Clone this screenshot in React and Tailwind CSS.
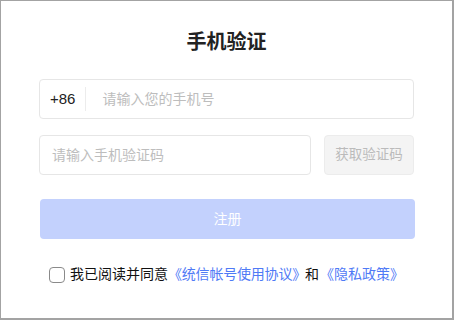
const App = () => {
  return (
    <div
      className="w-[454px] h-[320px] bg-white border border-r-2 border-b-2 border-[#a3a3a3] px-[38px] pt-[27px]"
      style={{ fontFamily: '"Liberation Sans", "Noto Sans CJK SC", sans-serif' }}
    >
      <h1 className="text-center text-[20px] leading-[28px] font-bold text-[#222]">手机验证</h1>

      <div className="mt-[23px] flex items-center h-[40px] border border-[#e6e6e6] rounded-[4px]">
        <span className="pl-[10px] pr-[10px] text-[15px] text-[#222]">+86</span>
        <span className="w-px h-[24px] bg-[#ececec]" />
        <span className="pl-[16px] text-[14px] text-[#bdbdbd]">请输入您的手机号</span>
      </div>

      <div className="mt-[16px] flex gap-[13px]">
        <div className="flex-1 flex items-center h-[40px] border border-[#e6e6e6] rounded-[4px] pl-[12px] text-[14px] text-[#bdbdbd]">
          请输入手机验证码
        </div>
        <button className="w-[90px] h-[40px] bg-[#f4f4f4] border border-[#ececec] rounded-[4px] text-[13.5px] text-[#bbbbbb]">
          获取验证码
        </button>
      </div>

      <button className="mt-[24px] w-[375px] ml-px h-[40px] rounded-[4px] bg-[#c3d1fd] text-white text-[14px]">
        注册
      </button>

      <div className="mt-[25px] flex items-center pl-[10px] text-[14px]">
        <span className="w-[16px] h-[16px] border border-[#8a8a8a] rounded-[4px] mr-[5px]" />
        <span className="text-[#111]">我已阅读并同意</span>
        <span className="text-[#4f7af6] tracking-[-0.2px]">《统信帐号使用协议》</span>
        <span className="text-[#111] ml-[-1px]">和</span>
        <span className="text-[#4f7af6] ml-[1px]">《隐私政策》</span>
      </div>
    </div>
  );
};

export default App;
